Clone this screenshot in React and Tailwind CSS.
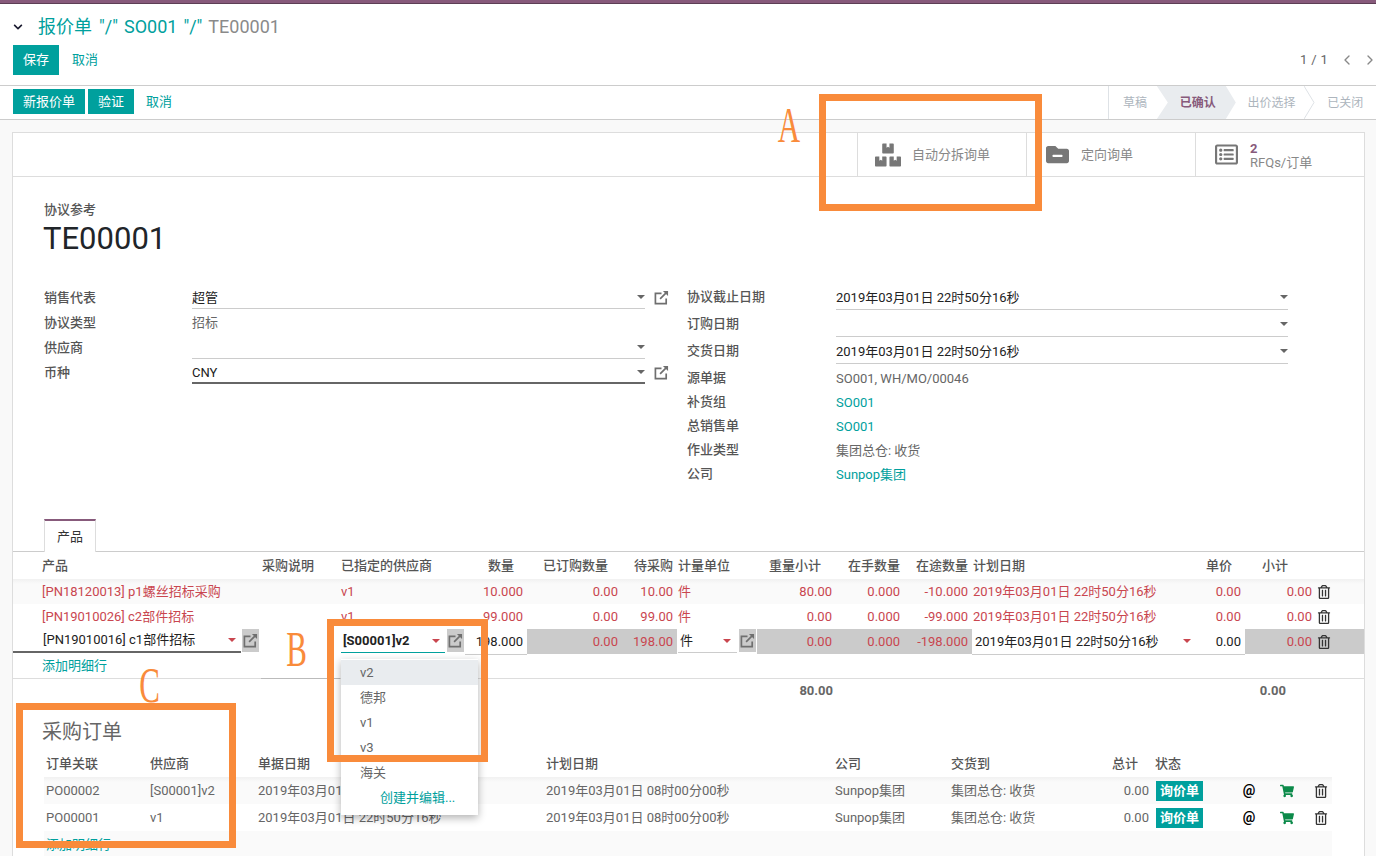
import { ChevronLeft, ChevronRight } from "lucide-react";
import {
  FaBoxes,
  FaChevronDown,
  FaFolderMinus,
  FaRegListAlt,
  FaRegTrashAlt,
  FaShoppingCart,
} from "react-icons/fa";

const DATE = "2019年03月01日 22时50分16秒";

const Caret = ({ red }) => (
  <span
    className={`inline-block w-0 h-0 border-x-[4px] border-x-transparent border-t-[4px] ${
      red ? "border-t-[#c9464f]" : "border-t-[#666]"
    }`}
  />
);

const LinkIcon = ({ size = 15, color = "#6f6f6f" }) => (
  <svg width={size} height={size} viewBox="0 0 16 16" fill="none" stroke={color} strokeWidth="1.8">
    <path d="M13 9v5.5H1.5V3.5H8" />
    <path d="M6.5 9.5 14 2" />
    <path d="M9.5 1h5.5v5.5" fill={color} stroke="none" />
  </svg>
);

const LinkTile = () => (
  <span className="w-[17px] h-[23px] bg-[#cbcbcb] flex items-center justify-center shrink-0">
    <LinkIcon />
  </span>
);

const FormLabel = ({ children }) => <span className="font-medium text-[#555]">{children}</span>;

const LeftRow = ({ label, children, link }) => (
  <div className="h-[25px] flex">
    <div className="w-[148px] leading-[23px]">
      <FormLabel>{label}</FormLabel>
    </div>
    <div className="w-[453px]">{children}</div>
    {link && (
      <span className="ml-[9px] h-[23px] flex items-center">
        <LinkIcon />
      </span>
    )}
  </div>
);

const SelectBox = ({ value, dark }) => (
  <div
    className={`h-[23px] flex items-center justify-between text-[#222] ${
      dark ? "border-b-2 border-[#666]" : "border-b border-[#ccc]"
    }`}
  >
    <span className="pt-[2px]">{value}</span>
    <Caret />
  </div>
);

const RightRow = ({ label, value, select, teal }) => (
  <div className={`flex ${select ? "h-[27px]" : "h-[24px] items-center"}`}>
    <div className={`w-[149px] ${select ? "leading-[24px]" : ""}`}>
      <FormLabel>{label}</FormLabel>
    </div>
    {select ? (
      <div className="w-[452px] h-[25px] flex items-center justify-between border-b border-[#ccc] text-[#222]">
        <span className="pt-[2px]">{value}</span>
        <Caret />
      </div>
    ) : (
      <span className={`pt-[1px] ${teal ? "text-[#00a09d]" : "text-[#666]"}`}>{value}</span>
    )}
  </div>
);

const redRows = [
  {
    name: "[PN18120013] p1螺丝招标采购",
    qty: "10.000",
    pending: "10.00",
    weight: "80.00",
    transit: "-10.000",
    bg: "bg-[linear-gradient(#f1f1f1,#fafafa_5px)]",
  },
  { name: "[PN19010026] c2部件招标", qty: "99.000", pending: "99.00", weight: "0.00", transit: "-99.000", bg: "bg-white" },
];

const ProductTable = () => (
  <table className="table-fixed w-[1351px] border-collapse">
    <colgroup>
      <col className="w-[248px]" />
      <col className="w-[79px]" />
      <col className="w-[125px]" />
      <col className="w-[62px]" />
      <col className="w-[95px]" />
      <col className="w-[55px]" />
      <col className="w-[80px]" />
      <col className="w-[79px]" />
      <col className="w-[68px]" />
      <col className="w-[68px]" />
      <col className="w-[224px]" />
      <col className="w-[49px]" />
      <col className="w-[71px]" />
      <col className="w-[48px]" />
    </colgroup>
    <thead>
      <tr className="h-[27px] text-[#555] whitespace-nowrap">
        <th className="font-medium text-left pl-[29px]">产品</th>
        <th className="font-medium text-left pl-[1px]">采购说明</th>
        <th className="font-medium text-left pl-[1px]">已指定的供应商</th>
        <th className="font-medium text-right pr-[13px]">数量</th>
        <th className="font-medium text-right pr-[14px]">已订购数量</th>
        <th className="font-medium text-right pr-[4px]">待采购</th>
        <th className="font-medium text-left pl-[1px]">计量单位</th>
        <th className="font-medium text-right pr-[15px]">重量小计</th>
        <th className="font-medium text-right pr-[4px]">在手数量</th>
        <th className="font-medium text-right pr-[4px]">在途数量</th>
        <th className="font-medium text-left pl-[1px]">计划日期</th>
        <th className="font-medium text-right pr-[13px]">单价</th>
        <th className="font-medium text-right pr-[28px]">小计</th>
        <th />
      </tr>
    </thead>
    <tbody className="text-[#c9464f]">
      {redRows.map((r) => (
        <tr key={r.name} className={`h-[25px] ${r.bg}`}>
          <td className="pl-[29px] whitespace-nowrap">{r.name}</td>
          <td />
          <td className="pl-[1px]">v1</td>
          <td className="text-right pr-[4px]">{r.qty}</td>
          <td className="text-right pr-[4px]">0.00</td>
          <td className="text-right pr-[4px]">{r.pending}</td>
          <td className="pl-[1px]">件</td>
          <td className="text-right pr-[4px]">{r.weight}</td>
          <td className="text-right pr-[4px]">0.000</td>
          <td className="text-right pr-[4px]">{r.transit}</td>
          <td className="pl-[1px] whitespace-nowrap">{DATE}</td>
          <td className="text-right pr-[4px]">0.00</td>
          <td className="text-right pr-[4px]">0.00</td>
          <td className="pl-[1px] text-[#333]">
            <FaRegTrashAlt size={14} />
          </td>
        </tr>
      ))}
      <tr className="h-[25px]">
        <td className="p-0">
          <div className="flex h-[25px] items-start">
            <div className="w-[228px] h-[24px] border-b-2 border-[#666] flex items-center justify-between pl-[30px] pr-[5px] text-[#222]">
              <span className="whitespace-nowrap">[PN19010016] c1部件招标</span>
              <Caret red />
            </div>
            <span className="ml-[1px]">
              <LinkTile />
            </span>
          </div>
        </td>
        <td />
        <td className="p-0">
          <div className="flex h-[25px] items-start pl-[1px]">
            <div className="w-[104px] h-[24px] border-b border-[#00a09d] flex items-center justify-between pl-[2px] pr-[5px] text-[#222] font-bold">
              <span className="whitespace-nowrap">[S00001]v2</span>
              <Caret red />
            </div>
            <span className="ml-[2px]">
              <LinkTile />
            </span>
          </div>
        </td>
        <td className="text-right pr-[4px] text-[#222] border-b border-[#ccc]">198.000</td>
        <td className="text-right pr-[4px] bg-[#cbcbcb]">0.00</td>
        <td className="text-right pr-[4px] bg-[#cbcbcb]">198.00</td>
        <td className="p-0">
          <div className="flex h-[25px] items-start pl-[1px]">
            <div className="w-[59px] h-[24px] border-b border-[#ccc] flex items-center justify-between pl-[2px] pr-[6px] text-[#222]">
              <span>件</span>
              <Caret red />
            </div>
            <span className="ml-[2px]">
              <LinkTile />
            </span>
          </div>
        </td>
        <td className="text-right pr-[4px] bg-[#cbcbcb]">0.00</td>
        <td className="text-right pr-[4px] bg-[#cbcbcb]">0.000</td>
        <td className="text-right pr-[4px] bg-[#cbcbcb] whitespace-nowrap">-198.000</td>
        <td className="p-0 border-b border-[#ccc]">
          <div className="flex h-[24px] items-center justify-between pl-[3px] pr-[5px] text-[#222] whitespace-nowrap">
            <span>{DATE}</span>
            <Caret red />
          </div>
        </td>
        <td className="text-right pr-[4px] text-[#222] border-b border-[#ccc]">0.00</td>
        <td className="text-right pr-[4px] bg-[#cbcbcb]">0.00</td>
        <td className="pl-[1px] bg-[#cbcbcb] text-[#333]">
          <FaRegTrashAlt size={14} />
        </td>
      </tr>
      <tr className="h-[24px]">
        <td className="pl-[29px] text-[#00a09d]">添加明细行</td>
        <td className="border-b border-[#bbb]" />
        <td colSpan={12} />
      </tr>
    </tbody>
    <tfoot>
      <tr className="h-[24px] border-t border-[#ddd] font-bold text-[#666]">
        <td colSpan={7} />
        <td className="text-right pr-[3px]">80.00</td>
        <td colSpan={4} />
        <td className="text-right pr-[30px]">0.00</td>
        <td />
      </tr>
    </tfoot>
  </table>
);

const orders = [
  { id: "PO00002", vendor: "[S00001]v2", bg: "bg-[linear-gradient(#f1f1f1,#fafafa_5px)]" },
  { id: "PO00001", vendor: "v1", bg: "bg-white" },
];

const OrderTable = () => (
  <table className="table-fixed w-[1288px] border-collapse">
    <colgroup>
      <col className="w-[104px]" />
      <col className="w-[108px]" />
      <col className="w-[288px]" />
      <col className="w-[289px]" />
      <col className="w-[116px]" />
      <col className="w-[136px]" />
      <col className="w-[68px]" />
      <col className="w-[77px]" />
      <col className="w-[38px]" />
      <col className="w-[37px]" />
      <col className="w-[27px]" />
    </colgroup>
    <thead>
      <tr className="h-[27px] text-[#555] text-left">
        <th className="font-medium pl-[2px]">订单关联</th>
        <th className="font-medium pl-[2px]">供应商</th>
        <th className="font-medium pl-[2px]">单据日期</th>
        <th className="font-medium pl-[2px]">计划日期</th>
        <th className="font-medium pl-[2px]">公司</th>
        <th className="font-medium pl-[2px]">交货到</th>
        <th className="font-medium pr-[15px] text-right">总计</th>
        <th className="font-medium pl-[2px]">状态</th>
        <th colSpan={3} />
      </tr>
    </thead>
    <tbody className="text-[#666]">
      {orders.map((o) => (
        <tr key={o.id} className={`h-[27px] ${o.bg}`}>
          <td className="pl-[2px]">{o.id}</td>
          <td className="pl-[2px]">{o.vendor}</td>
          <td className="pl-[2px] whitespace-nowrap">{DATE}</td>
          <td className="pl-[2px] whitespace-nowrap">2019年03月01日 08时00分00秒</td>
          <td className="pl-[2px]">Sunpop集团</td>
          <td className="pl-[2px]">集团总仓: 收货</td>
          <td className="text-right pr-[4px]">0.00</td>
          <td className="pl-[3px]">
            <span className="inline-flex items-center justify-center w-[47px] h-[20px] bg-[#00a09d] text-white font-bold align-middle">
              询价单
            </span>
          </td>
          <td className="text-center font-bold text-black text-[14px]">@</td>
          <td>
            <span className="flex justify-center text-[#0c8a4a]">
              <FaShoppingCart size={14} />
            </span>
          </td>
          <td>
            <span className="flex justify-center text-[#333] pl-[4px]">
              <FaRegTrashAlt size={14} />
            </span>
          </td>
        </tr>
      ))}
      <tr className="h-[28px] bg-[#fafafa]">
        <td colSpan={11} className="pl-[2px] text-[#00a09d]">
          添加明细行
        </td>
      </tr>
    </tbody>
  </table>
);

const StatusBar = () => (
  <div className="flex h-full border-l border-[#dee2e6] relative text-[12px] text-[#adb5bd]">
    <div className="w-[48px] flex items-center pl-[14px] whitespace-nowrap">草稿</div>
    <div className="w-[79px] flex items-center pl-[23px] font-bold text-[#875a7b] bg-[#e9ecef] whitespace-nowrap [clip-path:polygon(0_0,69px_0,79px_50%,69px_100%,0_100%,11px_50%)]">
      已确认
    </div>
    <div className="w-[80px] flex items-center pl-[12px] whitespace-nowrap relative">
      出价选择
      <svg className="absolute right-0 top-0 h-full w-[11px]" viewBox="0 0 11 33" fill="none" stroke="#dee2e6">
        <path d="M0 0 10 16.5 0 33" />
      </svg>
    </div>
    <div className="w-[61px] flex items-center pl-[12px] whitespace-nowrap">已关闭</div>
  </div>
);

const Annotation = ({ className }) => <div className={`absolute border-[7px] border-[#f98b3b] z-20 ${className}`} />;

const Letter = ({ className, children }) => (
  <div
    className={`absolute z-20 text-[#f98b3b] text-[50px] leading-none font-['Liberation_Serif',serif] scale-x-[0.62] ${className}`}
  >
    {children}
  </div>
);

export default function App() {
  return (
    <div className="relative w-[1376px] h-[856px] overflow-hidden bg-[#f9f9f9] text-[13px] text-[#666] font-['Roboto','Noto_Sans_CJK_SC',sans-serif]">
      <div className="h-[4px] bg-[#875a7b] border-b border-[#5d3e55]" />

      <div className="h-[82px] bg-white border-b border-[#ccc] px-[13px] relative">
        <div className="h-[41px] pt-[4px] flex items-center text-[18px] text-[#00a09d] whitespace-nowrap">
          <FaChevronDown size={10} className="text-[#1a1a2e] mr-[14px]" />
          <span className="ml-px">报价单</span>
          <span className="ml-[7px]">"/"</span>
          <span className="ml-[6px]">SO001</span>
          <span className="ml-[6px]">"/"</span>
          <span className="text-[#8a8a8a] ml-[6px]">TE00001</span>
        </div>
        <div className="flex items-center justify-between">
          <div className="flex items-center">
            <button className="w-[46px] h-[30px] bg-[#00a09d] text-white">保存</button>
            <span className="ml-[13px] text-[#00a09d]">取消</span>
          </div>
          <div className="flex items-center text-[#666] -mr-[15px]">
            <span className="tracking-[0.3px]">1 / 1</span>
            <ChevronLeft size={16} className="ml-[11px] text-[#888]" />
            <ChevronRight size={16} className="ml-[7px] text-[#888]" />
          </div>
        </div>
      </div>

      <div className="h-[34px] bg-white border-b border-[#ccc] pl-[13px] flex items-center justify-between">
        <div className="flex items-center -mt-[2px]">
          <button className="w-[72px] h-[25px] bg-[#00a09d] text-white">新报价单</button>
          <button className="w-[46px] h-[25px] ml-[3px] bg-[#00a09d] text-white">验证</button>
          <span className="ml-[12px] text-[#00a09d]">取消</span>
        </div>
        <div className="h-full w-[268px]">
          <StatusBar />
        </div>
      </div>

      <div className="ml-[12px] mt-[12px] w-[1353px] h-[740px] bg-white border border-[#ddd]">
        <div className="h-[44px] border-b border-[#ddd] flex justify-end text-[#888]">
          <div className="w-[169px] border-l border-[#ddd] flex items-center pl-[17px] gap-[11px]">
            <FaBoxes size={26} className="text-[#777]" />
            <span className="pt-[1px]">自动分拆询单</span>
          </div>
          <div className="w-[169px] border-l border-[#ddd] flex items-center pl-[19px] gap-[12px]">
            <FaFolderMinus size={23} className="text-[#777]" />
            <span className="pt-[1px]">定向询单</span>
          </div>
          <div className="w-[169px] border-l border-[#ddd] flex items-center pl-[19px] gap-[12px]">
            <FaRegListAlt size={23} className="text-[#777]" />
            <div className="leading-[14px] pt-[3px]">
              <div className="font-bold text-[#875a7b]">2</div>
              <div>RFQs/订单</div>
            </div>
          </div>
        </div>

        <div className="pl-[31px] pt-[23px]">
          <div className="h-[20px] leading-[20px] font-medium text-[#555]">协议参考</div>
          <div className="h-[36px] leading-[38px] -ml-px text-[31px] text-[#212529]">TE00001</div>
          <div className="mt-[29px] flex">
            <div className="w-[643px] pt-[1px]">
              <LeftRow label="销售代表" link>
                <SelectBox value="超管" />
              </LeftRow>
              <LeftRow label="协议类型">
                <span className="leading-[23px]">招标</span>
              </LeftRow>
              <LeftRow label="供应商">
                <SelectBox value="" />
              </LeftRow>
              <LeftRow label="币种" link>
                <SelectBox value="CNY" dark />
              </LeftRow>
            </div>
            <div>
              <RightRow label="协议截止日期" value={DATE} select />
              <RightRow label="订购日期" value="" select />
              <RightRow label="交货日期" value={DATE} select />
              <RightRow label="源单据" value="SO001, WH/MO/00046" />
              <RightRow label="补货组" value="SO001" teal />
              <RightRow label="总销售单" value="SO001" teal />
              <RightRow label="作业类型" value="集团总仓: 收货" />
              <RightRow label="公司" value="Sunpop集团" teal />
            </div>
          </div>
        </div>

        <div className="mt-[33px] h-[33px] border-b border-[#ccc] pl-[31px]">
          <div className="w-[52px] h-[33px] bg-white border-x border-[#ddd] border-t-2 border-t-[#875a7b] flex items-center justify-center text-[#333]">
            产品
          </div>
        </div>

        <ProductTable />

        <div className="pl-[31px]">
          <div className="h-[48px] flex items-end pb-[4px] -ml-[2px] text-[20px] leading-[28px] text-[#666]">采购订单</div>
          <OrderTable />
        </div>
      </div>

      <div className="absolute left-[341px] top-[659px] w-[137px] h-[156px] bg-white shadow-[0_3px_8px_rgba(0,0,0,0.3)] text-[#666] z-10">
        <div className="h-[25px] mt-[1px] bg-[#e9ecef] flex items-center pl-[19px]">v2</div>
        <div className="h-[25px] flex items-center pl-[19px]">德邦</div>
        <div className="h-[25px] flex items-center pl-[19px]">v1</div>
        <div className="h-[25px] flex items-center pl-[19px]">v3</div>
        <div className="h-[25px] flex items-center pl-[19px]">海关</div>
        <div className="h-[25px] flex items-center pl-[39px] text-[#00a09d]">创建并编辑...</div>
      </div>

      <Annotation className="left-[819px] top-[94px] w-[223px] h-[117px]" />
      <Annotation className="left-[327px] top-[619px] w-[161px] h-[143px]" />
      <Annotation className="left-[16px] top-[703px] w-[220px] h-[145px]" />
      <Letter className="left-[771px] top-[100px]">A</Letter>
      <Letter className="left-[280px] top-[624px]">B</Letter>
      <Letter className="left-[133px] top-[660px]">C</Letter>
    </div>
  );
}
